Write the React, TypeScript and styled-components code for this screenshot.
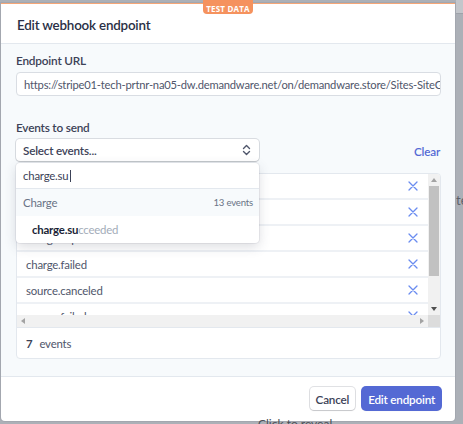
import React from "react";
import styled, { createGlobalStyle } from "styled-components";

const FONT = `"Lato", "Open Sans", sans-serif`;

const Global = createGlobalStyle`
  html, body { margin: 0; padding: 0; }
  body {
    background: #acb0b7;
    font-family: ${FONT};
    -webkit-font-smoothing: antialiased;
  }
  * { box-sizing: border-box; }
`;

const Backdrop = styled.div`
  width: 463px;
  height: 424px;
  position: relative;
  overflow: hidden;
  padding: 3px 8px 0 1px;
  display: flex;
  flex-direction: column;
`;

const Dialog = styled.div`
  position: relative;
  width: 454px;
  height: 418px;
  background: #fff;
  border-top: 1px solid #f5a677;
  border-radius: 0 0 4px 4px;
  display: flex;
  flex-direction: column;
  box-shadow: 0 0 0 1px rgba(60, 66, 87, 0.08);
`;

const Badge = styled.div`
  position: absolute;
  top: -4px;
  left: 50%;
  transform: translateX(-50%);
  width: 50px;
  height: 14px;
  background: #f5925e;
  color: #fff;
  border-radius: 0 0 4px 4px;
  font-family: "Open Sans", sans-serif;
  font-size: 8px;
  font-weight: 700;
  letter-spacing: 0.2px;
  display: flex;
  align-items: center;
  justify-content: center;
  padding-top: 2px;
`;

const Header = styled.div`
  height: 40px;
  display: flex;
  align-items: center;
  padding: 2px 0 0 16px;
  border-bottom: 1px solid #e3e8ee;
`;

const Title = styled.h1`
  margin: 0;
  font-size: 13.4px;
  font-weight: 600;
  letter-spacing: -0.2px;
  color: #2a2f45;
  line-height: 16px;
`;

const Body = styled.div`
  flex: 1;
  background: #f7fafc;
  padding: 9px 14px 0 15px;
  display: flex;
  flex-direction: column;
  border-bottom: 1px solid #e3e8ee;
`;

const Field = styled.div<{ $gap?: number }>`
  display: flex;
  flex-direction: column;
  margin-bottom: ${(p) => p.$gap ?? 0}px;
`;

const Label = styled.div`
  font-size: 11.8px;
  font-weight: 600;
  letter-spacing: -0.2px;
  color: #3c4257;
  line-height: 16px;
  margin-bottom: 3px;
`;

const TextBox = styled.div`
  height: 24px;
  background: #fff;
  border: 1px solid #d9dde3;
  border-radius: 4px;
  padding: 0 7px;
  display: flex;
  align-items: center;
  font-size: 11.2px;
  letter-spacing: -0.2px;
  color: #4f566b;
  white-space: nowrap;
  overflow: hidden;
`;

const SelectRow = styled.div`
  display: flex;
  align-items: center;
  justify-content: space-between;
  margin-bottom: 12px;
`;

const SelectWrap = styled.div`
  position: relative;
  width: 243px;
`;

const SelectBox = styled.div`
  height: 22px;
  background: #fff;
  border-radius: 4px;
  box-shadow: 0 0 0 1px rgba(60, 66, 87, 0.16), 0 1px 1px rgba(0, 0, 0, 0.12);
  padding: 0 8px 0 7px;
  display: flex;
  align-items: center;
  justify-content: space-between;
  font-size: 11.7px;
  font-weight: 600;
  letter-spacing: -0.2px;
  color: #3c4257;
`;

const ClearLink = styled.span`
  font-size: 11.7px;
  font-weight: 600;
  letter-spacing: -0.2px;
  color: #5469d4;
  padding-top: 2px;
  margin-right: 1px;
`;

const Dropdown = styled.div`
  position: absolute;
  top: 24px;
  left: 0;
  width: 243px;
  background: #fff;
  border-radius: 4px;
  box-shadow: 0 0 0 1px rgba(60, 66, 87, 0.08), 0 4px 12px rgba(60, 66, 87, 0.18);
  z-index: 2;
  overflow: hidden;
`;

const SearchRow = styled.div`
  height: 26px;
  padding: 0 7px;
  display: flex;
  align-items: center;
  font-size: 11.4px;
  letter-spacing: -0.2px;
  color: #3c4257;
  border-bottom: 1px solid #e3e8ee;
`;

const Caret = styled.span`
  display: inline-block;
  width: 1px;
  height: 12px;
  background: #3c4257;
  margin-left: 1px;
`;

const GroupRow = styled.div`
  height: 27px;
  background: #f7fafc;
  padding: 0 6px 0 7px;
  display: flex;
  align-items: center;
  justify-content: space-between;
  font-size: 11.4px;
  letter-spacing: -0.2px;
  color: #697386;
`;

const GroupCount = styled.span`
  font-size: 9.6px;
  letter-spacing: -0.2px;
  color: #697386;
`;

const OptionRow = styled.div`
  height: 27px;
  padding: 0 16px;
  display: flex;
  align-items: center;
  font-size: 11.4px;
  letter-spacing: -0.2px;
`;

const Match = styled.span`
  font-weight: 700;
  color: #1a1f36;
`;

const Rest = styled.span`
  color: #a3acb9;
`;

const EventList = styled.div`
  background: #fff;
  border: 1px solid #e3e8ee;
  border-radius: 4px;
  overflow: hidden;
`;

const ScrollArea = styled.div`
  display: grid;
  grid-template-columns: 1fr 12px;
  grid-template-rows: 141px 12px;
`;

const Rows = styled.div`
  overflow: hidden;
  background: #eef1f5;
  display: flex;
  flex-direction: column;
  gap: 2px;
`;

const EventRow = styled.div`
  flex: 0 0 24px;
  background: #fff;
  display: flex;
  align-items: center;
  justify-content: space-between;
  padding: 0 10px 0 9px;
  font-size: 11.4px;
  letter-spacing: -0.2px;
  color: #4f566b;
`;

const RemoveButton = styled.span`
  width: 10px;
  height: 10px;
  display: flex;
  color: #6a8cf0;
`;

const VScroll = styled.div`
  background: #f1f1f1;
  display: flex;
  flex-direction: column;
  align-items: center;
`;

const HScroll = styled.div`
  background: #f1f1f1;
  display: flex;
  align-items: center;
  justify-content: space-between;
  padding: 0 4px;
`;

const Corner = styled.div`
  background: #dcdcdc;
`;

const ArrowBtn = styled.div`
  flex: 0 0 12px;
  width: 12px;
  height: 12px;
  display: flex;
  align-items: center;
  justify-content: center;
`;

const Tri = styled.span<{ $dir: "up" | "down" | "left" | "right"; $color: string }>`
  width: 0;
  height: 0;
  border-style: solid;
  ${(p) =>
    p.$dir === "up"
      ? `border-width: 0 3.5px 4px 3.5px; border-color: transparent transparent ${p.$color} transparent;`
      : p.$dir === "down"
      ? `border-width: 4px 3.5px 0 3.5px; border-color: ${p.$color} transparent transparent transparent;`
      : p.$dir === "left"
      ? `border-width: 3.5px 4px 3.5px 0; border-color: transparent ${p.$color} transparent transparent;`
      : `border-width: 3.5px 0 3.5px 4px; border-color: transparent transparent transparent ${p.$color};`}
`;

const Thumb = styled.div`
  width: 10px;
  height: 90px;
  background: #c1c1c1;
`;

const Track = styled.div`
  flex: 1;
`;

const ListFooter = styled.div`
  height: 31px;
  border-top: 1px solid #e3e8ee;
  display: flex;
  align-items: center;
  padding-left: 9px;
  font-size: 11.4px;
  letter-spacing: -0.2px;
  color: #4f566b;
`;

const Count = styled.b`
  font-weight: 700;
  color: #3c4257;
  margin-right: 7px;
`;

const Footer = styled.div`
  height: 44px;
  display: flex;
  align-items: flex-start;
  justify-content: flex-end;
  gap: 7px;
  padding: 10px 14px 0 0;
`;

const Button = styled.button<{ $primary?: boolean }>`
  height: 23px;
  border-radius: 4px;
  border: none;
  padding: 0 6px;
  font-family: ${FONT};
  font-size: 11.7px;
  font-weight: 600;
  letter-spacing: -0.2px;
  cursor: pointer;
  background: ${(p) => (p.$primary ? "#5469d4" : "#fff")};
  color: ${(p) => (p.$primary ? "#fff" : "#3c4257")};
  box-shadow: ${(p) =>
    p.$primary
      ? "0 0 0 1px #5469d4, 0 1px 1px rgba(0,0,0,0.12)"
      : "0 0 0 1px rgba(60,66,87,0.16), 0 1px 1px rgba(0,0,0,0.12)"};
`;

const SideText = styled.div`
  position: absolute;
  left: 456px;
  top: 192px;
  font-size: 13px;
  color: #5d616a;
`;

const BottomText = styled.div`
  position: absolute;
  left: 258px;
  top: 416px;
  font-size: 12px;
  color: #4a4e56;
`;

const TopBand = styled.div`
  position: absolute;
  left: 456px;
  top: 0;
  width: 10px;
  height: 14px;
  background: #c3c6cb;
  border-bottom: 1px solid #9ea2a9;
`;

const Chevron = () => (
  <svg width="9" height="12" viewBox="0 0 9 12" fill="none" stroke="#4f566b" strokeWidth="1.4" strokeLinecap="round" strokeLinejoin="round">
    <path d="M1.5 4.5 L4.5 1.5 L7.5 4.5" />
    <path d="M1.5 7.5 L4.5 10.5 L7.5 7.5" />
  </svg>
);

const XIcon = () => (
  <svg width="10" height="10" viewBox="0 0 10 10" stroke="currentColor" strokeWidth="1.3" strokeLinecap="round">
    <path d="M1 1 L9 9 M9 1 L1 9" />
  </svg>
);

const events = [
  "charge.succeeded",
  "charge.refunded",
  "charge.captured",
  "charge.failed",
  "source.canceled",
  "source.failed",
  "source.chargeable",
];

export default function App() {
  return (
    <>
      <Global />
      <Backdrop>
        <TopBand />
        <Dialog>
          <Badge>TEST DATA</Badge>
          <Header>
            <Title>Edit webhook endpoint</Title>
          </Header>
          <Body>
            <Field $gap={24}>
              <Label>Endpoint URL</Label>
              <TextBox>https://stripe01-tech-prtnr-na05-dw.demandware.net/on/demandware.store/Sites-SiteGenesis-Site/default/Stripe-WebHook</TextBox>
            </Field>
            <Field>
              <Label>Events to send</Label>
              <SelectRow>
                <SelectWrap>
                  <SelectBox>
                    Select events...
                    <Chevron />
                  </SelectBox>
                  <Dropdown>
                    <SearchRow>
                      charge.su
                      <Caret />
                    </SearchRow>
                    <GroupRow>
                      Charge
                      <GroupCount>13 events</GroupCount>
                    </GroupRow>
                    <OptionRow>
                      <Match>charge.su</Match>
                      <Rest>cceeded</Rest>
                    </OptionRow>
                  </Dropdown>
                </SelectWrap>
                <ClearLink>Clear</ClearLink>
              </SelectRow>
              <EventList>
                <ScrollArea>
                  <Rows>
                    {events.map((e) => (
                      <EventRow key={e}>
                        {e}
                        <RemoveButton>
                          <XIcon />
                        </RemoveButton>
                      </EventRow>
                    ))}
                  </Rows>
                  <VScroll>
                    <ArrowBtn>
                      <Tri $dir="up" $color="#a3a3a3" />
                    </ArrowBtn>
                    <Thumb />
                    <Track />
                    <ArrowBtn>
                      <Tri $dir="down" $color="#505050" />
                    </ArrowBtn>
                  </VScroll>
                  <HScroll>
                    <Tri $dir="left" $color="#a3a3a3" />
                    <Tri $dir="right" $color="#a3a3a3" />
                  </HScroll>
                  <Corner />
                </ScrollArea>
                <ListFooter>
                  <Count>7</Count>events
                </ListFooter>
              </EventList>
            </Field>
          </Body>
          <Footer>
            <Button>Cancel</Button>
            <Button $primary>Edit endpoint</Button>
          </Footer>
        </Dialog>
        <SideText>te</SideText>
        <BottomText>Click to reveal</BottomText>
      </Backdrop>
    </>
  );
}
